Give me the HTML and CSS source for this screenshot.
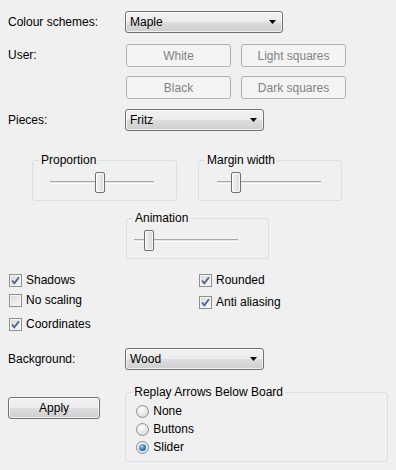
FILE: index.html
```html
<!DOCTYPE html>
<html lang="en">

<head>
    <meta charset="UTF-8">
    <meta name="viewport" content="width=device-width, initial-scale=1.0">
    <title>Board preferences</title>
    <link rel="stylesheet" href="styles.css">
</head>

<body>
    <div class="prefs">
        <div class="field-row">
            <span class="field-label">Colour schemes:</span>
            <div class="combo combo-wide">
                <span>Maple</span>
                <svg class="combo-arrow" width="7" height="4" viewBox="0 0 7 4"><polygon points="0,0 7,0 3.5,4" /></svg>
            </div>
        </div>

        <div class="field-row user-row">
            <span class="field-label">User:</span>
            <div class="colour-buttons">
                <button class="btn" disabled>White</button>
                <button class="btn" disabled>Light squares</button>
                <button class="btn" disabled>Black</button>
                <button class="btn" disabled>Dark squares</button>
            </div>
        </div>

        <div class="field-row pieces-row">
            <span class="field-label">Pieces:</span>
            <div class="combo combo-narrow">
                <span>Fritz</span>
                <svg class="combo-arrow" width="7" height="4" viewBox="0 0 7 4"><polygon points="0,0 7,0 3.5,4" /></svg>
            </div>
        </div>

        <div class="slider-row">
            <div class="group proportion">
                <span class="group-title">Proportion</span>
                <div class="slider">
                    <div class="slider-track"></div>
                    <div class="slider-thumb" style="left: 45px"></div>
                </div>
            </div>
            <div class="group margin-width">
                <span class="group-title">Margin width</span>
                <div class="slider">
                    <div class="slider-track"></div>
                    <div class="slider-thumb" style="left: 14px"></div>
                </div>
            </div>
        </div>

        <div class="slider-row animation-row">
            <div class="group animation">
                <span class="group-title">Animation</span>
                <div class="slider">
                    <div class="slider-track"></div>
                    <div class="slider-thumb" style="left: 10px"></div>
                </div>
            </div>
        </div>

        <div class="checks">
            <div class="check-col">
                <label class="check"><span class="check-box"><svg width="11" height="11" viewBox="0 0 11 11"><path d="M2 5.5 L4.3 8.3 L9 2.2" /></svg></span>Shadows</label>
                <label class="check"><span class="check-box"></span>No scaling</label>
                <label class="check spaced"><span class="check-box"><svg width="11" height="11" viewBox="0 0 11 11"><path d="M2 5.5 L4.3 8.3 L9 2.2" /></svg></span>Coordinates</label>
            </div>
            <div class="check-col">
                <label class="check"><span class="check-box"><svg width="11" height="11" viewBox="0 0 11 11"><path d="M2 5.5 L4.3 8.3 L9 2.2" /></svg></span>Rounded</label>
                <label class="check nudged"><span class="check-box"><svg width="11" height="11" viewBox="0 0 11 11"><path d="M2 5.5 L4.3 8.3 L9 2.2" /></svg></span>Anti aliasing</label>
            </div>
        </div>

        <div class="field-row background-row">
            <span class="field-label">Background:</span>
            <div class="combo combo-narrow">
                <span>Wood</span>
                <svg class="combo-arrow" width="7" height="4" viewBox="0 0 7 4"><polygon points="0,0 7,0 3.5,4" /></svg>
            </div>
        </div>

        <div class="bottom-row">
            <button class="btn apply">Apply</button>
            <div class="group replay">
                <span class="group-title">Replay Arrows Below Board</span>
                <div class="radio-list">
                    <label class="radio"><span class="radio-dot"></span>None</label>
                    <label class="radio"><span class="radio-dot"></span>Buttons</label>
                    <label class="radio selected"><span class="radio-dot"></span>Slider</label>
                </div>
            </div>
        </div>
    </div>
</body>

</html>
```

FILE: styles.css
```css
* {
    margin: 0;
    padding: 0;
    box-sizing: border-box;
}

body {
    font-family: 'Liberation Sans', Arial, sans-serif;
    font-size: 12px;
    background-color: #f0f0f0;
    color: #000;
}

.prefs {
    padding: 11px 8px 0 8px;
}

/* label + control rows */
.field-row {
    display: flex;
    align-items: center;
}

.field-label {
    width: 117px;
    flex-shrink: 0;
}

.user-row {
    margin-top: 11px;
    align-items: flex-start;
}

.user-row .field-label {
    line-height: 23px;
}

.pieces-row {
    margin-top: 10px;
}

.background-row {
    margin-top: 14px;
}

/* drop-down boxes */
.combo {
    height: 22px;
    border: 1px solid #707070;
    border-radius: 3px;
    background: linear-gradient(#f2f2f2 0, #ebebeb 50%, #dddddd 50%, #cfcfcf 100%);
    box-shadow: inset 0 0 0 1px rgba(255, 255, 255, 0.7);
    display: flex;
    align-items: center;
    justify-content: space-between;
    padding: 0 6px 0 4px;
}

.combo-wide {
    width: 158px;
}

.combo-narrow {
    width: 139px;
}

.combo-arrow polygon {
    fill: #000;
}

/* push buttons */
.btn {
    font-family: inherit;
    font-size: 12px;
    height: 23px;
    border: 1px solid #707070;
    border-radius: 3px;
    background: linear-gradient(#f2f2f2 0, #ebebeb 50%, #dddddd 50%, #cfcfcf 100%);
    box-shadow: inset 0 0 0 1px rgba(255, 255, 255, 0.7);
    color: #000;
}

.btn:disabled {
    border-color: #adb2b5;
    background: #f4f4f4;
    box-shadow: none;
    color: #838383;
}

.colour-buttons {
    margin-left: 1px;
    display: grid;
    grid-template-columns: 105px 105px;
    column-gap: 10px;
    row-gap: 9px;
}

/* group boxes: title sits on the top border */
.group {
    border: 1px solid #d5dfe5;
    border-radius: 3px;
}

.group-title {
    display: block;
    width: fit-content;
    margin: -8px 0 0 6px;
    padding: 0 2px;
    line-height: 14px;
    background: #f0f0f0;
}

.slider-row {
    margin-top: 29px;
    margin-left: 24px;
    display: flex;
    gap: 21px;
}

.animation-row {
    margin-top: 17px;
    margin-left: 118px;
}

.proportion {
    width: 145px;
}

.margin-width {
    width: 144px;
}

.animation {
    width: 143px;
}

.slider {
    position: relative;
    width: 104px;
    height: 21px;
    margin: 5px 0 7px 17px;
}

.margin-width .slider {
    margin-left: 18px;
}

.animation .slider {
    margin-left: 7px;
}

.slider-track {
    position: relative;
    top: 9px;
    height: 3px;
    border-top: 1px solid #a7a7a7;
    border-bottom: 1px solid #ffffff;
    background: #e3e3e3;
}

.slider-thumb {
    position: absolute;
    top: 0;
    width: 10px;
    height: 21px;
    border: 1px solid #707070;
    border-radius: 2px;
    background: linear-gradient(to right, #f4f4f4, #dadada);
    box-shadow: inset 0 0 0 1px rgba(255, 255, 255, 0.8);
}

/* check boxes */
.checks {
    margin-top: 11px;
    display: flex;
}

.check-col {
    width: 196px;
    padding-left: 1px;
}

.check {
    display: flex;
    align-items: center;
    height: 20px;
    gap: 4px;
}

.check.spaced {
    margin-top: 4px;
}

.check.nudged {
    margin-top: 2px;
}

.check-box {
    width: 13px;
    height: 13px;
    border: 1px solid #8e8f8f;
    background: linear-gradient(135deg, #d6d6d6, #fbfbfb);
    box-shadow: inset 0 0 0 1px #f4f4f4;
    display: flex;
    align-items: center;
    justify-content: center;
}

.check-box path {
    fill: none;
    stroke: #4b5f9c;
    stroke-width: 1.8;
}

/* bottom: apply + replay arrows */
.bottom-row {
    margin-top: 22px;
    display: flex;
    align-items: flex-start;
    gap: 25px;
}

.apply {
    margin-top: 5px;
    width: 93px;
    height: 22px;
}

.replay {
    width: 265px;
}

.radio-list {
    padding: 3px 0 5px 10px;
}

.radio {
    display: flex;
    align-items: center;
    gap: 4px;
    height: 18px;
}

.radio-dot {
    width: 13px;
    height: 13px;
    border-radius: 50%;
    border: 1px solid #8e8f8f;
    background: radial-gradient(circle at 40% 35%, #ffffff, #d2d2d2);
    display: flex;
    align-items: center;
    justify-content: center;
}

.radio.selected .radio-dot::after {
    content: '';
    width: 7px;
    height: 7px;
    border-radius: 50%;
    background: radial-gradient(circle at 40% 35%, #9fdcf7 0, #2a7ab5 55%, #0f3d66 100%);
}
```
